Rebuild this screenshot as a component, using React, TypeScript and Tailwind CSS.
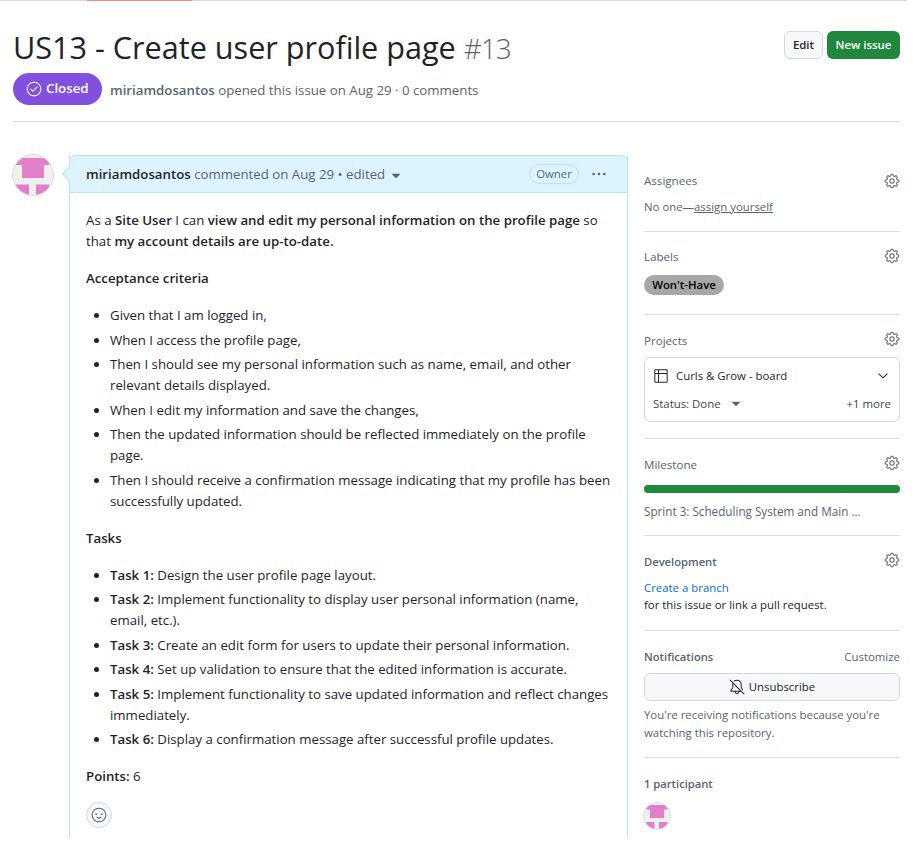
import { GoGear, GoCheckCircle, GoKebabHorizontal, GoSmiley, GoBellSlash, GoTable, GoChevronDown, GoTriangleDown } from "react-icons/go";

function Avatar({ size }: { size: string }) {
	return (
		<svg viewBox="1 1 40 40" className={`${size} rounded-full border border-[#dedede] bg-[#f0f0f0] shrink-0`}>
			<path fill="#e27fc9" d="M4 4h33.3v7H4zM10 11h22v13H10zM4 30.4h13v11H4zM24 30.4h13.3v11H24z" />
		</svg>
	);
}

function SideSection({ title, pt = "pt-4", pb, gear = "-mt-[4px]", weight = "font-medium text-[11.6px]", children }: { title: string; pt?: string; pb: string; gear?: string; weight?: string; children?: React.ReactNode }) {
	return (
		<div className={`border-b border-[#d8dee4] ${pt} ${pb}`}>
			<div className={`flex items-center justify-between text-[#59636e] h-5 ${weight}`}>
				<span>{title}</span>
				<GoGear className={`text-base text-[#59636e] ${gear}`} />
			</div>
			{children}
		</div>
	);
}

const criteria = [
	"Given that I am logged in,",
	"When I access the profile page,",
	"Then I should see my personal information such as name, email, and other relevant details displayed.",
	"When I edit my information and save the changes,",
	"Then the updated information should be reflected immediately on the profile page.",
	"Then I should receive a confirmation message indicating that my profile has been successfully updated.",
];

const tasks = [
	["Task 1:", "Design the user profile page layout."],
	["Task 2:", "Implement functionality to display user personal information (name, email, etc.)."],
	["Task 3:", "Create an edit form for users to update their personal information."],
	["Task 4:", "Set up validation to ensure that the edited information is accurate."],
	["Task 5:", "Implement functionality to save updated information and reflect changes immediately."],
	["Task 6:", "Display a confirmation message after successful profile updates."],
];

export default function App() {
	return (
		<div className="h-[842px] w-[914px] overflow-hidden bg-white text-[#1f2328] font-['Open_Sans',sans-serif]">
			<div className="w-[907px] h-px bg-[#d1d9e0] flex">
				<div className="ml-[87px] w-[105px] bg-[#fd8c73]" />
			</div>
			<div className="w-[887px] ml-[13px]">
				<div className="flex justify-between items-start pt-[30px] pb-4 border-b border-[#d1d9e0]">
					<div>
						<h1 className="h-8 text-[30.6px] leading-[32px] font-normal">
							US13 - Create user profile page <span className="text-[#59636e] font-light text-[28px] tracking-[-1px]">#13</span>
						</h1>
						<div className="flex items-center mt-[10px]">
							<span className="flex items-center gap-1 h-8 pl-[13px] w-[89px] rounded-full bg-[#8250df] text-white text-[13.25px] font-semibold">
								<GoCheckCircle className="text-base shrink-0" /> Closed
							</span>
							<span className="ml-2 pt-[3px] text-[13.25px] text-[#59636e]">
								<b className="font-semibold">miriamdosantos</b> opened this issue on Aug 29 · 0 comments
							</span>
						</div>
					</div>
					<div className="flex gap-1 text-[11.4px] font-semibold">
						<button className="h-7 w-[39px] rounded-md border border-[#d1d9e0] bg-[#f6f8fa]">Edit</button>
						<button className="h-7 w-[73px] rounded-md bg-[#1f883d] text-white">New issue</button>
					</div>
				</div>

				<div className="flex pt-[33px]">
					<div className="-ml-px -mt-px shrink-0">
						<Avatar size="w-[42px] h-[42px]" />
					</div>
					<div className="relative ml-[15px] w-[559px] h-[683px] border-x border-[#b6e3ff]">
						<div className="absolute -left-[6px] top-[14px] w-[10px] h-[10px] rotate-45 bg-[#ddf4ff] border-l border-b border-[#b6e3ff]" />
						<div className="-mx-px flex items-center justify-between h-[38px] pl-4 pr-5 bg-[#ddf4ff] border border-[#b6e3ff] rounded-t-md text-[13.25px] text-[#59636e]">
							<span className="relative flex items-center pt-px">
								<b className="font-semibold text-[#1f2328]">miriamdosantos</b>&nbsp;commented on Aug 29 • edited
								<GoTriangleDown className="ml-[3px] mt-[3px] text-base" />
							</span>
							<span className="relative flex items-center gap-3">
								<span className="px-2 h-5 w-[50px] justify-center flex items-center rounded-full border border-[#b6e3ff] text-[11.4px] font-medium">Owner</span>
								<GoKebabHorizontal className="text-base" />
							</span>
						</div>
						<div className="px-4 pt-[17px] text-[13.25px] leading-[21px]">
							<p className="mb-4">
								As a <b className="font-semibold">Site User</b> I can <b className="font-semibold">view and edit my personal information on the profile page</b> so that <b className="font-semibold">my account details are up-to-date.</b>
							</p>
							<p className="mb-4 font-semibold">Acceptance criteria</p>
							<ul className="list-disc pl-6 mb-4 space-y-[3.5px]">
								{criteria.map((c) => (
									<li key={c}>{c}</li>
								))}
							</ul>
							<p className="mb-4 font-semibold">Tasks</p>
							<ul className="list-disc pl-6 mb-4 space-y-[3.5px]">
								{tasks.map(([t, d]) => (
									<li key={t}>
										<b className="font-semibold">{t}</b> {d}
									</li>
								))}
							</ul>
							<p>
								<b className="font-semibold">Points:</b> 6
							</p>
							<div className="mt-[15px] w-[26px] h-[26px] rounded-full border border-[#d1d9e0] bg-[#f6f8fa] flex items-center justify-center text-[#59636e]">
								<GoSmiley className="text-base" />
							</div>
						</div>
					</div>
					<div className="ml-4 w-[256px]">
						<SideSection title="Assignees" pb="pb-[15px]" gear="">
							<div className="mt-[7px] text-[11.4px] leading-[18px] text-[#59636e]">
								No one—<span className="underline">assign yourself</span>
							</div>
						</SideSection>
						<SideSection title="Labels" pt="pt-[15px]" pb="pb-[19px]" gear="-mt-[2px]">
							<div className="mt-2 flex">
								<span className="flex items-center h-5 w-[80px] justify-center rounded-full bg-[#a7a7a7] text-[11.4px] font-semibold text-black">Won't-Have</span>
							</div>
						</SideSection>
						<SideSection title="Projects" pb="pb-4">
							<div className="mt-[6px] h-[65px] border border-[#d1d9e0] rounded-md pl-2 pr-2 pt-[9px] text-[11.4px]">
								<div className="flex items-center justify-between">
									<span className="flex items-center gap-[7px] font-medium">
										<GoTable className="text-base" /> Curls &amp; Grow - board
									</span>
									<GoChevronDown className="text-base" />
								</div>
								<div className="flex items-center justify-between mt-[11px] text-[#3d444d]">
									<span className="flex items-center gap-[7px]">
										Status: Done <GoTriangleDown className="text-base text-[#59636e]" />
									</span>
									<span>+1 more</span>
								</div>
							</div>
						</SideSection>
						<SideSection title="Milestone" pb="pb-[15px]">
							<div className="mt-[10px] h-2 rounded-full bg-[#1f883d]" />
							<div className="mt-[9px] text-[11.7px] leading-[18px] font-medium text-[#59636e]">Sprint 3: Scheduling System and Main ...</div>
						</SideSection>
						<SideSection title="Development" pb="pb-[17px]" weight="font-semibold text-[11.2px]">
							<div className="mt-[7px] text-[11.4px] leading-[17px]">
								<span className="block text-[#0969da]">Create a branch</span>
								<div>for this issue or link a pull request.</div>
							</div>
						</SideSection>
						<div className="pt-4 pb-[15px] border-b border-[#d8dee4]">
							<div className="flex justify-between text-[11.4px] h-5 items-center text-[#59636e]">
								<span className="font-semibold text-[11.2px]">Notifications</span>
								<span>Customize</span>
							</div>
							<button className="mt-[6px] w-full h-7 flex items-center justify-center gap-1 rounded-md border border-[#d1d9e0] bg-[#f6f8fa] text-[11.4px] font-medium">
								<GoBellSlash className="text-base" /> Unsubscribe
							</button>
							<p className="mt-[5px] text-[11.4px] leading-[18px] text-[#59636e]">You're receiving notifications because you're watching this repository.</p>
						</div>
						<div className="pt-4">
							<div className="text-[11.2px] font-semibold text-[#59636e] h-5 flex items-center">1 participant</div>
							<div className="mt-2 -ml-px">
								<Avatar size="w-[28px] h-[28px]" />
							</div>
						</div>
					</div>
				</div>
			</div>
		</div>
	);
}
